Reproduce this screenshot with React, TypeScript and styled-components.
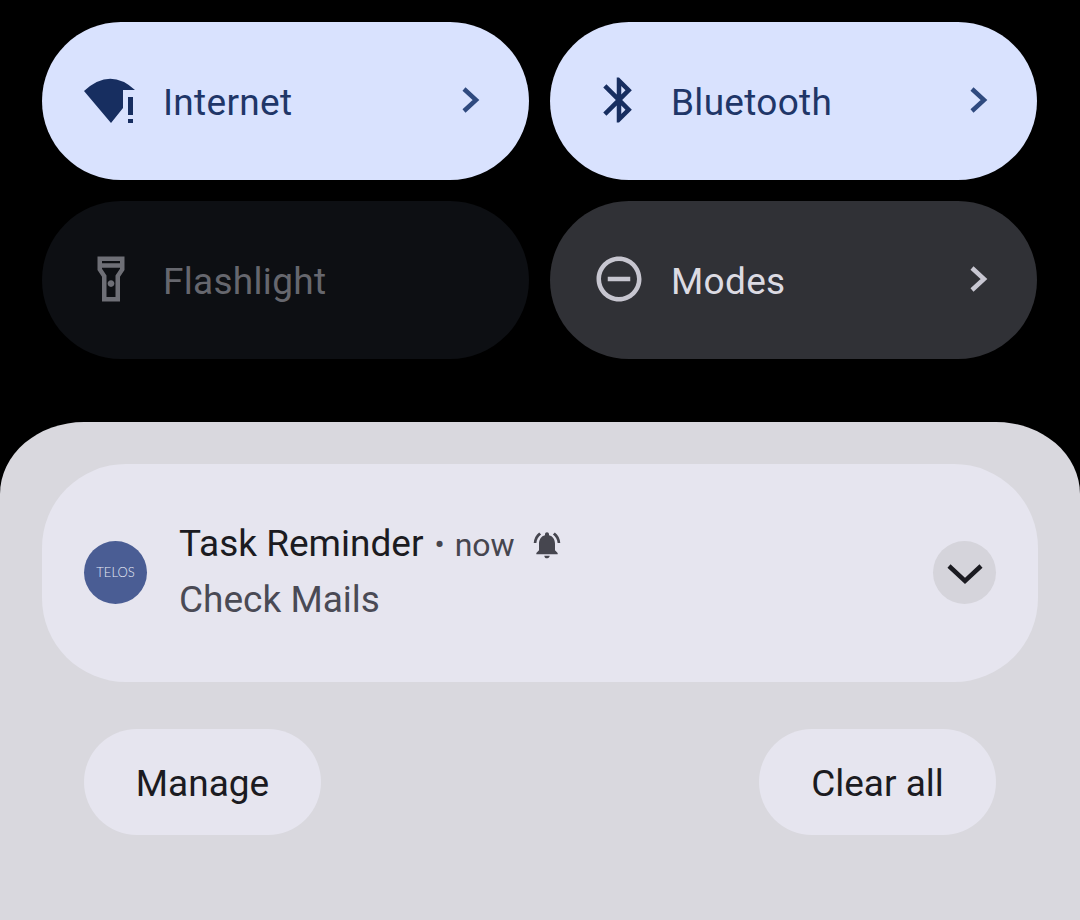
import React from "react";
import styled, { createGlobalStyle } from "styled-components";

type Tone = "active" | "off" | "idle";

const tones = {
  active: { bg: "#d9e2fe", fg: "#172e60", label: "#1f3668", chevron: "#2f4a7f" },
  off: { bg: "#0d0f13", fg: "#6e6f76", label: "#66676e", chevron: "#6e6f76" },
  idle: { bg: "#303136", fg: "#c7c6d0", label: "#dcdbe3", chevron: "#c8c7d2" },
};

const WifiIcon = () => (
  <svg width="54" height="54" viewBox="0 0 54 54" fill="currentColor">
    <path d="M0 18Q26-6 51 17H39V35L27 50Z" />
    <rect x="44" y="24" width="5" height="18" />
    <rect x="44" y="46" width="5" height="4" />
  </svg>
);

const BluetoothIcon = () => (
  <svg width="54" height="54" viewBox="0 0 24 24" fill="currentColor">
    <path d="M17.710 7.710L12 2h-1v7.590L6.410 5 5 6.410 10.590 12 5 17.590 6.410 19 11 14.410V22h1l5.710-5.710-4.300-4.290 4.300-4.290zM13 5.830l1.880 1.880L13 9.590V5.830zm1.880 10.460L13 18.170v-3.760l1.880 1.880z" />
  </svg>
);

const FlashlightIcon = () => (
  <svg width="54" height="54" viewBox="0 0 24 24" fill="currentColor">
    <path d="M18 2H6v6l2 3v11h8V11l2-3V2zm-2 2v1H8V4h8zm-2 6.400V20h-4v-9.600L8 7.400V7h8v.400l-2 3zM13.500 14c0 .830-.670 1.500-1.500 1.500s-1.500-.670-1.500-1.500.670-1.500 1.500-1.500 1.500.670 1.500 1.500z" />
  </svg>
);

const ModesIcon = () => (
  <svg width="54" height="54" viewBox="0 0 24 24" fill="currentColor">
    <path d="M7 11v2h10v-2H7zm5-9C6.480 2 2 6.480 2 12s4.480 10 10 10 10-4.480 10-10S17.520 2 12 2zm0 18c-4.410 0-8-3.590-8-8s3.590-8 8-8 8 3.590 8 8-3.590 8-8 8z" />
  </svg>
);

const BellIcon = () => (
  <svg width="32" height="32" viewBox="0 0 24 24" fill="currentColor">
    <path d="M7.580 4.080L6.150 2.650C3.750 4.480 2.170 7.300 2.030 10.500h2c.150-2.650 1.510-4.970 3.550-6.420zm12.390 6.420h2c-.150-3.200-1.730-6.020-4.120-7.850l-1.420 1.430c2.020 1.450 3.390 3.770 3.540 6.420zM18 11c0-3.070-1.640-5.640-4.500-6.320V4c0-.830-.670-1.500-1.500-1.500s-1.500.670-1.500 1.500v.680C7.630 5.360 6 7.920 6 11v5l-2 2v1h16v-1l-2-2v-5zm-6 11c.140 0 .270-.010.400-.040.650-.140 1.180-.580 1.440-1.180.100-.240.150-.500.150-.780h-4c.010 1.100.900 2 2.010 2z" />
  </svg>
);

const ChevronRight = () => (
  <svg width="20" height="28" viewBox="0 0 20 28" fill="none" stroke="currentColor" strokeWidth="4.500">
    <path d="M3 3L15 14L3 25" />
  </svg>
);

const ChevronDown = () => (
  <svg width="36" height="22" viewBox="0 0 36 22" fill="none" stroke="currentColor" strokeWidth="4.500">
    <path d="M2 3L18 18L34 3" />
  </svg>
);

const tiles: { label: string; tone: Tone; icon: React.ReactNode; more: boolean }[] = [
  { label: "Internet", tone: "active", icon: <WifiIcon />, more: true },
  { label: "Bluetooth", tone: "active", icon: <BluetoothIcon />, more: true },
  { label: "Flashlight", tone: "off", icon: <FlashlightIcon />, more: false },
  { label: "Modes", tone: "idle", icon: <ModesIcon />, more: true },
];

export default function App() {
  return (
    <Screen>
      <GlobalStyle />
      <TileGrid>
        {tiles.map((t) => (
          <Tile key={t.label} $tone={t.tone}>
            <TileIcon>{t.icon}</TileIcon>
            <TileLabel $tone={t.tone}>{t.label}</TileLabel>
            {t.more && (
              <TileChevron $tone={t.tone}>
                <ChevronRight />
              </TileChevron>
            )}
          </Tile>
        ))}
      </TileGrid>
      <Shade>
        <Card>
          <Avatar>TELOS</Avatar>
          <CardBody>
            <CardHead>
              <AppName>Task Reminder</AppName>
              <Dot>•</Dot>
              <When>now</When>
              <Bell>
                <BellIcon />
              </Bell>
            </CardHead>
            <Message>Check Mails</Message>
          </CardBody>
          <Expand>
            <ChevronDown />
          </Expand>
        </Card>
        <Actions>
          <Pill>Manage</Pill>
          <Pill>Clear all</Pill>
        </Actions>
      </Shade>
    </Screen>
  );
}

const GlobalStyle = createGlobalStyle`
  html, body {
    margin: 0;
    padding: 0;
    background: #000;
  }
`;

const Screen = styled.div`
  width: 1080px;
  height: 920px;
  overflow: hidden;
  background: #000;
  font-family: Roboto, "Noto Sans", sans-serif;
  font-weight: 380;
  display: flex;
  flex-direction: column;
`;

const TileGrid = styled.div`
  display: grid;
  grid-template-columns: 487px 487px;
  grid-auto-rows: 158px;
  gap: 21px;
  padding: 22px 0 0 42px;
`;

const Tile = styled.div<{ $tone: Tone }>`
  display: flex;
  align-items: center;
  padding: 0 42px;
  border-radius: 79px;
  background: ${(p) => tones[p.$tone].bg};
  color: ${(p) => tones[p.$tone].fg};
`;

const TileIcon = styled.div`
  display: flex;
  width: 54px;
  height: 54px;
  margin-right: 25px;
  margin-top: -3px;
`;

const TileLabel = styled.span<{ $tone: Tone }>`
  font-size: 37px;
  letter-spacing: 0.3px;
  margin-top: 2px;
  color: ${(p) => tones[p.$tone].label};
`;

const TileChevron = styled.div<{ $tone: Tone }>`
  display: flex;
  margin-left: auto;
  margin-right: 6px;
  margin-top: -3px;
  color: ${(p) => tones[p.$tone].chevron};
`;

const Shade = styled.div`
  flex: 1;
  margin-top: 63px;
  padding: 42px 42px 0;
  border-radius: 84px 84px 0 0 / 72px 72px 0 0;
  background: #d9d8de;
`;

const Card = styled.div`
  display: flex;
  align-items: center;
  width: 996px;
  height: 218px;
  padding: 0 42px;
  box-sizing: border-box;
  border-radius: 84px;
  background: #e6e5ef;
`;

const Avatar = styled.div`
  display: flex;
  align-items: center;
  justify-content: center;
  flex: none;
  width: 63px;
  height: 63px;
  margin-top: -2px;
  border-radius: 50%;
  background: #4a5d94;
  color: #e6e9f4;
  font-family: Lato, sans-serif;
  font-weight: 300;
  font-size: 13px;
`;

const CardBody = styled.div`
  flex: 1;
  margin-left: 32px;
  margin-bottom: 3px;
  display: flex;
  flex-direction: column;
  gap: 12px;
`;

const CardHead = styled.div`
  display: flex;
  align-items: center;
  height: 44px;
`;

const AppName = styled.span`
  font-size: 37px;
  color: #1b1b21;
`;

const Dot = styled.span`
  margin-left: 11px;
  margin-top: 2px;
  font-size: 30px;
  color: #46464f;
`;

const When = styled.span`
  margin-left: 10px;
  margin-top: 2px;
  font-size: 32px;
  color: #46464f;
`;

const Bell = styled.span`
  display: flex;
  margin-left: 16px;
  margin-top: 2px;
  color: #46464f;
`;

const Message = styled.div`
  font-size: 37px;
  line-height: 44px;
  color: #4a4a55;
`;

const Expand = styled.div`
  display: flex;
  align-items: center;
  justify-content: center;
  flex: none;
  width: 63px;
  height: 63px;
  margin-top: -2px;
  padding-top: 4px;
  box-sizing: border-box;
  border-radius: 50%;
  background: #d5d4db;
  color: #1b1b21;
`;

const Actions = styled.div`
  display: flex;
  justify-content: space-between;
  margin-top: 47px;
  padding: 0 42px;
`;

const Pill = styled.div`
  display: flex;
  align-items: center;
  justify-content: center;
  width: 237px;
  height: 106px;
  padding-top: 2px;
  box-sizing: border-box;
  border-radius: 53px;
  background: #e6e5ef;
  color: #1b1b21;
  font-size: 37px;
`;
